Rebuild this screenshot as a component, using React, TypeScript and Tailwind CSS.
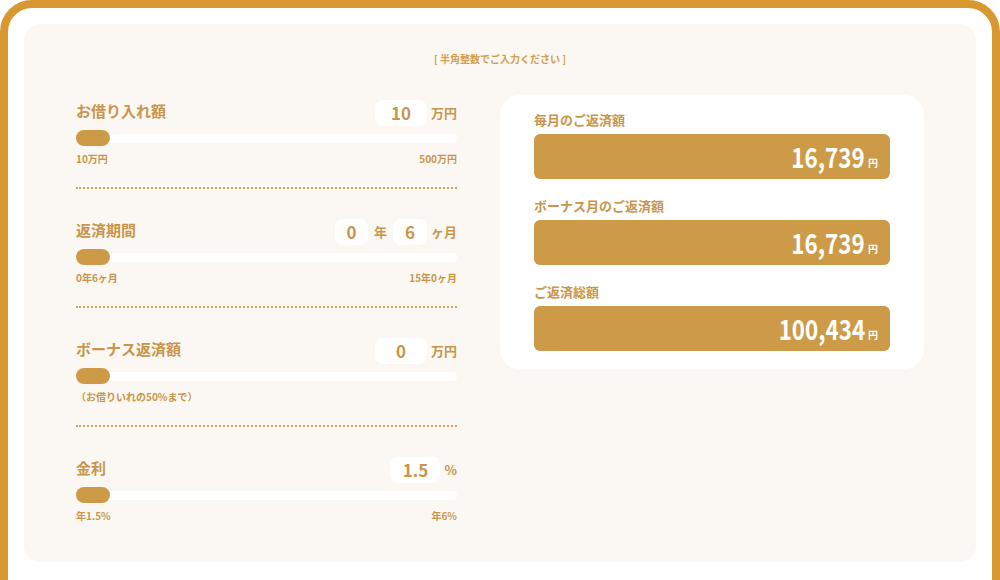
const font = { fontFamily: '"Noto Sans CJK JP", "Noto Sans", sans-serif' };

function Slider() {
  return (
    <div className="relative mt-1 flex h-4 items-center">
      <div className="h-[9px] w-full rounded-full bg-white" />
      <div className="absolute left-0 top-0 h-4 w-[34px] rounded-full bg-[#cd9b48]" />
    </div>
  );
}

function NumBox({ value, w = "w-[52px]" }: { value: string; w?: string }) {
  return (
    <div className={`flex h-[26px] ${w} items-center justify-center rounded-lg bg-white text-[17px] font-semibold text-[#c9954a]`}>
      {value}
    </div>
  );
}

function Section({
  title,
  inputs,
  labels,
  last,
}: {
  title: string;
  inputs: React.ReactNode;
  labels: React.ReactNode;
  last?: boolean;
}) {
  return (
    <div className={last ? "" : "mb-[30px]"}>
      <div className="flex h-[26px] items-center justify-between">
        <span className="mb-[3px] text-[15px] font-bold text-[#c9954a]">{title}</span>
        <div className="flex items-center">{inputs}</div>
      </div>
      <Slider />
      <div className="mt-[5px] flex h-[14px] items-center justify-between text-[10px] font-semibold text-[#c9954a]">
        {labels}
      </div>
      {!last && <div className="mt-[22px] border-t-2 border-dotted border-[#d4a45a]" />}
    </div>
  );
}

function Result({ label, value, first }: { label: string; value: string; first?: boolean }) {
  return (
    <div className={first ? "" : "mt-[18px]"}>
      <div className="h-[18px] text-[13px] font-bold leading-[18px] text-[#c9954a]">{label}</div>
      <div className="mt-[5px] flex h-[45px] items-end justify-end rounded-md bg-[#cd9b48] pb-[6px] pr-3 text-white">
        <span className="inline-block origin-right scale-x-[0.8] text-[28px] font-bold leading-[34px]">{value}</span>
        <span className="mb-[3px] ml-[3px] text-[10px] font-bold leading-[14px]">円</span>
      </div>
    </div>
  );
}

export default function App() {
  return (
    <div className="h-[580px] w-[1000px] overflow-hidden bg-white" style={font}>
      <div className="h-[640px] rounded-[32px] border-8 border-[#d8972f] bg-white p-4">
        <div className="h-[538px] rounded-2xl bg-[#fbf8f3] pt-[29px]">
          <div className="text-center text-[10px] font-bold leading-3 text-[#d19e52]">[ 半角整数でご入力ください ]</div>
          <div className="mt-[30px] flex pl-[52px]">
            <div className="w-[381px] pt-[5px]">
              <Section
                title="お借り入れ額"
                inputs={
                  <>
                    <NumBox value="10" />
                    <span className="ml-[4px] text-[13px] font-bold text-[#c9954a]">万円</span>
                  </>
                }
                labels={
                  <>
                    <span>10万円</span>
                    <span>500万円</span>
                  </>
                }
              />
              <Section
                title="返済期間"
                inputs={
                  <>
                    <NumBox value="0" w="w-[33px]" />
                    <span className="mx-[6px] text-[13px] font-bold text-[#c9954a]">年</span>
                    <NumBox value="6" w="w-[34px]" />
                    <span className="ml-[4px] text-[13px] font-bold text-[#c9954a]">ヶ月</span>
                  </>
                }
                labels={
                  <>
                    <span>0年6ヶ月</span>
                    <span>15年0ヶ月</span>
                  </>
                }
              />
              <Section
                title="ボーナス返済額"
                inputs={
                  <>
                    <NumBox value="0" />
                    <span className="ml-[4px] text-[13px] font-bold text-[#c9954a]">万円</span>
                  </>
                }
                labels={<span>（お借りいれの50%まで）</span>}
              />
              <Section
                title="金利"
                last
                inputs={
                  <>
                    <NumBox value="1.5" w="w-[50px]" />
                    <span className="ml-[4px] text-[13px] font-bold text-[#c9954a]">%</span>
                  </>
                }
                labels={
                  <>
                    <span>年1.5%</span>
                    <span>年6%</span>
                  </>
                }
              />
            </div>
            <div className="ml-[43px] h-fit w-[424px] rounded-[20px] bg-white px-[34px] pb-[18px] pt-4">
              <Result first label="毎月のご返済額" value="16,739" />
              <Result label="ボーナス月のご返済額" value="16,739" />
              <Result label="ご返済総額" value="100,434" />
            </div>
          </div>
        </div>
      </div>
    </div>
  );
}
